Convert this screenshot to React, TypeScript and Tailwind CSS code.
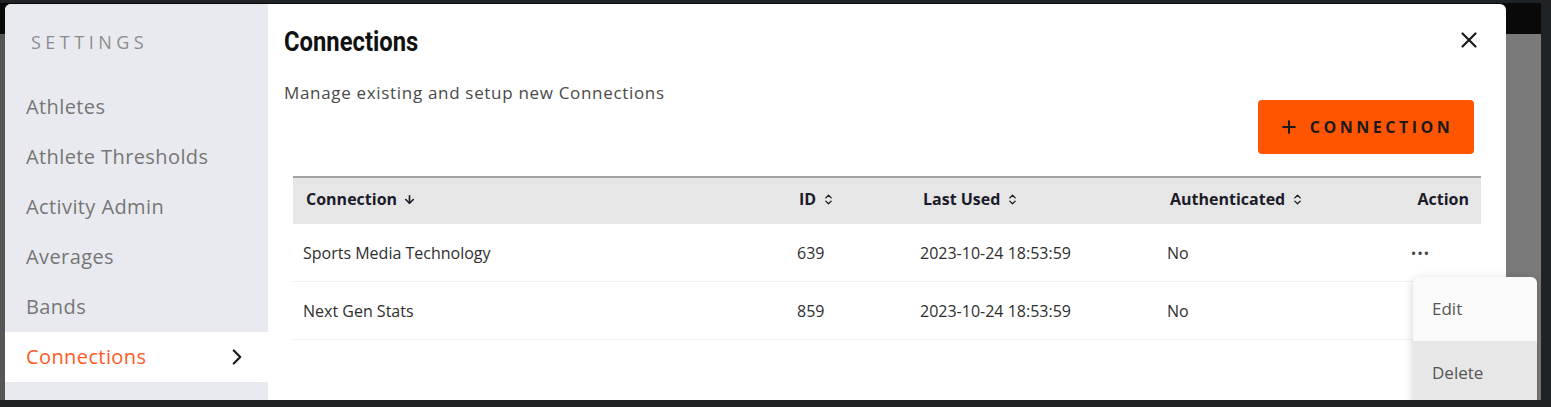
import React from 'react';
import { X, ChevronRight, ChevronsUpDown, ArrowDown, Plus } from 'lucide-react';

const menu = ['Athletes', 'Athlete Thresholds', 'Activity Admin', 'Averages', 'Bands', 'Connections', 'Positions'];

const rows = [
  { name: 'Sports Media Technology', id: '639', lastUsed: '2023-10-24 18:53:59', auth: 'No' },
  { name: 'Next Gen Stats', id: '859', lastUsed: '2023-10-24 18:53:59', auth: 'No' },
];

const cols = 'grid grid-cols-[494px_123px_247px_1fr_120px]';

export default function App() {
  return (
    <div className="w-[1551px] h-[407px] overflow-hidden bg-[#202326] pt-[3px] font-['Open_Sans',sans-serif]">
      <div className="relative w-[1541px] h-[397px] overflow-hidden bg-gradient-to-r from-[#565656] to-[#7a7a7a]">
        <div className="h-[31px] bg-[#090909]" />

        {/* modal */}
        <div className="absolute left-[5px] top-[1px] w-[1501px] h-[420px] bg-white rounded-tr-md rounded-tl-md overflow-hidden flex">
          <aside className="w-[263px] shrink-0 bg-[#e9eaef]">
            <div className="h-[78px] pt-[26px] pl-[26px] text-[18px] leading-[24px] tracking-[0.25em] text-[#8c8c8c]">SETTINGS</div>
            {menu.map((m) => {
              const active = m === 'Connections';
              return (
                <div
                  key={m}
                  className={
                    active
                      ? 'h-[50px] flex items-center justify-between pl-[21px] pr-[18px] bg-white text-[20px] tracking-[0.02em] text-[#ff5a1f]'
                      : 'h-[50px] flex items-center pl-[21px] text-[20px] tracking-[0.02em] text-[#767676]'
                  }
                >
                  <span>{m}</span>
                  {active && <ChevronRight size={26} strokeWidth={2} className="text-[#1a1a1a]" />}
                </div>
              );
            })}
          </aside>

          <main className="flex-1 pt-[22px]">
            <div className="flex items-center justify-between pl-[16px] pr-[24px] h-[32px]">
              <h1 className="font-['Roboto',sans-serif] font-bold text-[28px] leading-[32px] text-[#111] scale-x-[0.85] origin-left">Connections</h1>
              <X size={26} strokeWidth={2} className="text-[#1a1a1a] -mt-[4px]" />
            </div>
            <div className="flex items-start justify-between pl-[16px] pr-[32px] mt-[23px]">
              <p className="text-[17px] leading-[24px] tracking-[0.04em] text-[#4a4a4a]">Manage existing and setup new Connections</p>
              <button className="mt-[19px] w-[216px] h-[54px] rounded bg-[#ff5500] flex items-center justify-center gap-[11px] text-[#1a1a1a]">
                <Plus size={20} strokeWidth={2.5} />
                <span className="text-[16px] font-bold tracking-[0.22em]">CONNECTION</span>
              </button>
            </div>

            <div className="mx-[25px] mt-[22px] border-t-2 border-[#a3a3a3] text-[16px]">
              <div className={`${cols} h-[46px] pb-[4px] items-center bg-[#e6e6e6] font-bold text-[#1c1c2a]`}>
                <div className="pl-[13px] flex items-center gap-[6px]">Connection <ArrowDown size={13} strokeWidth={3} /></div>
                <div className="pl-[12px] flex items-center gap-[6px]">ID <ChevronsUpDown size={13} strokeWidth={2.5} /></div>
                <div className="pl-[13px] flex items-center gap-[6px]">Last Used <ChevronsUpDown size={13} strokeWidth={2.5} /></div>
                <div className="pl-[13px] flex items-center gap-[6px]">Authenticated <ChevronsUpDown size={13} strokeWidth={2.5} /></div>
                <div className="pr-[12px] text-right">Action</div>
              </div>
              {rows.map((r) => (
                <div key={r.id} className={`${cols} h-[58px] items-center border-b border-[#efefef] text-[#2e2e2e]`}>
                  <div className="pl-[10px]">{r.name}</div>
                  <div className="pl-[10px]">{r.id}</div>
                  <div className="pl-[10px]">{r.lastUsed}</div>
                  <div className="pl-[10px]">{r.auth}</div>
                  <div className="pr-[51px] text-right">{r.id === '639' ? <span className="text-[15px] tracking-[0.05em] text-[#444]">•••</span> : null}</div>
                </div>
              ))}
            </div>
          </main>
        </div>

        {/* dropdown menu */}
        <div className="absolute left-[1413px] top-[274px] w-[124px] h-[140px] bg-[#fafafa] rounded-md shadow-[0_2px_10px_rgba(0,0,0,0.18)] overflow-hidden text-[17px] text-[#555]">
          <div className="h-[64px] flex items-center pl-[19px]">Edit</div>
          <div className="h-[65px] flex items-center pl-[19px] pb-[1px] bg-[#e7e7e7]">Delete</div>
        </div>
      </div>
    </div>
  );
}
